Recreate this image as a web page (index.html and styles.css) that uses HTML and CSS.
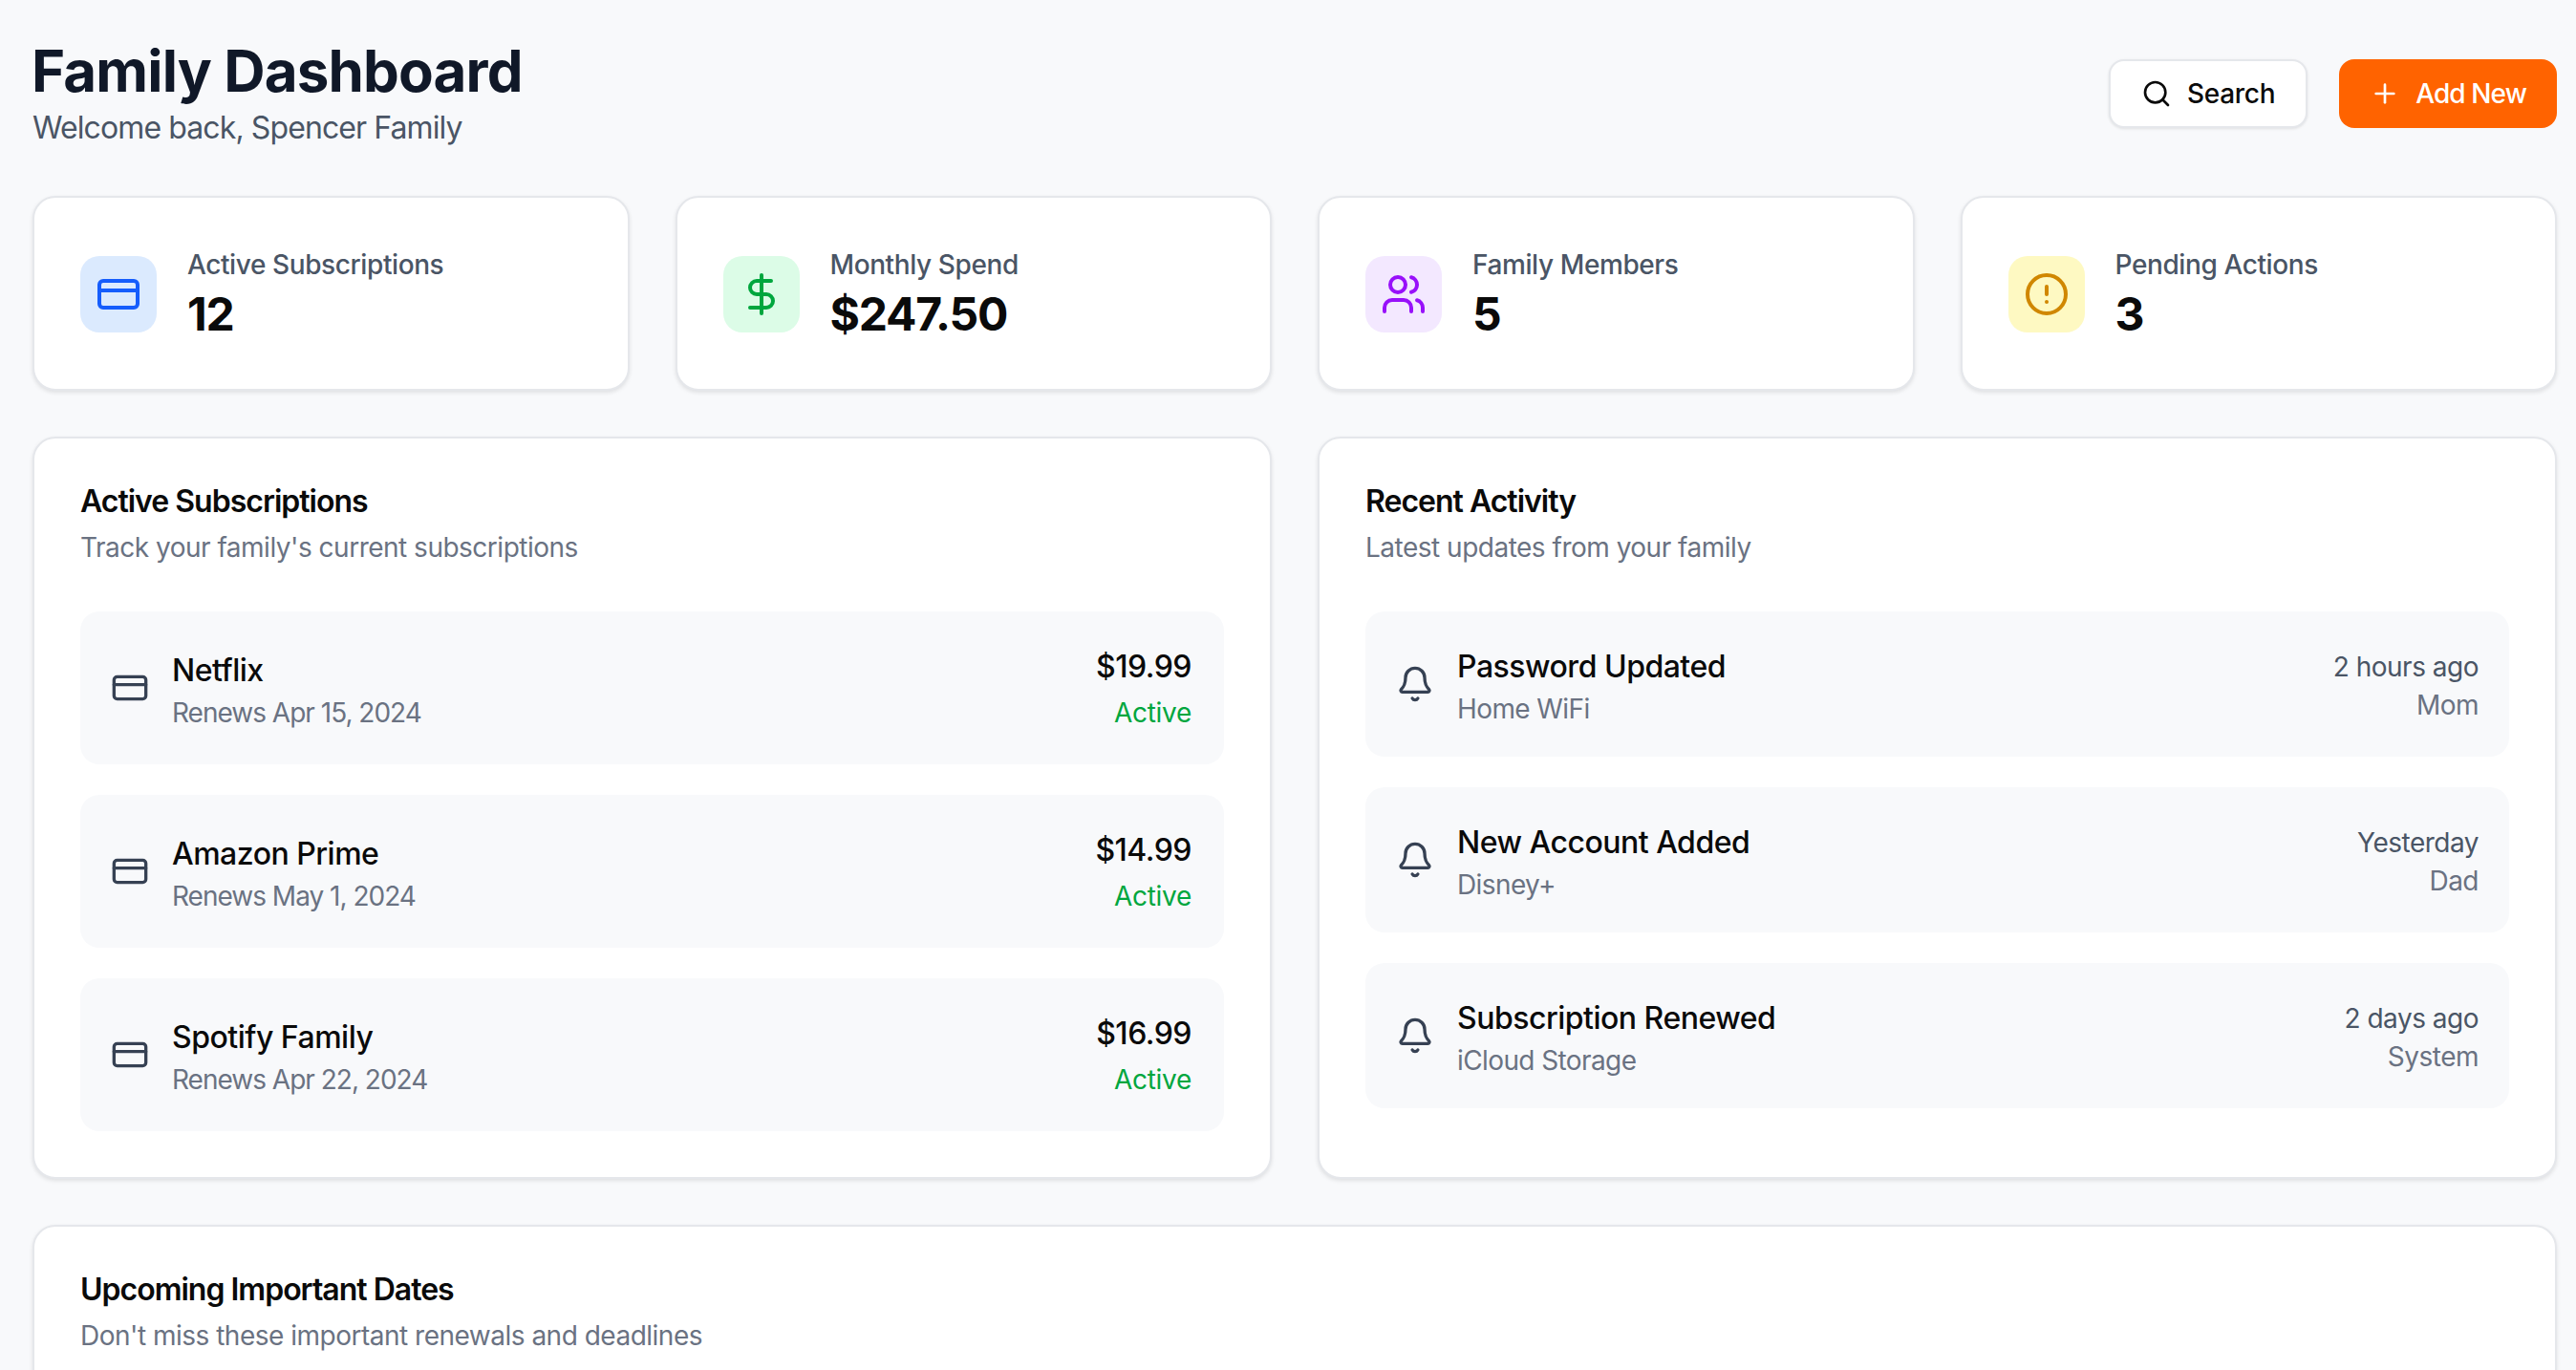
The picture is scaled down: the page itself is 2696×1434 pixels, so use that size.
FILE: index.html
```html
<!DOCTYPE html>
<html lang="en">
<head>
  <meta charset="UTF-8" />
  <meta name="viewport" content="width=device-width, initial-scale=1.0" />
  <title>Family Dashboard</title>
  <link rel="stylesheet" href="styles.css">
</head>
<body>
  <svg class="sprite" aria-hidden="true">
    <symbol id="i-card" viewBox="0 0 24 24"><rect x="2" y="5" width="20" height="14" rx="2"/><line x1="2" y1="10" x2="22" y2="10"/></symbol>
    <symbol id="i-bell" viewBox="0 0 24 24"><path d="M10.268 21a2 2 0 0 0 3.464 0"/><path d="M3.262 15.326A1 1 0 0 0 4 17h16a1 1 0 0 0 .74-1.673C19.41 13.956 18 12.499 18 8A6 6 0 0 0 6 8c0 4.499-1.411 5.956-2.738 7.326"/></symbol>
  </svg>

  <div class="page">
    <header class="top">
      <div>
        <h1>Family Dashboard</h1>
        <p class="welcome">Welcome back, Spencer Family</p>
      </div>
      <div class="actions">
        <button class="btn btn-light" type="button">
          <svg class="btn-icon" viewBox="0 0 24 24"><circle cx="11" cy="11" r="8"/><path d="m21 21-4.3-4.3"/></svg>
          Search
        </button>
        <button class="btn btn-orange" type="button">
          <svg class="btn-icon" viewBox="0 0 24 24"><path d="M5 12h14"/><path d="M12 5v14"/></svg>
          Add New
        </button>
      </div>
    </header>

    <section class="stats">
      <div class="card stat">
        <div class="stat-icon blue"><svg viewBox="0 0 24 24"><use href="#i-card"/></svg></div>
        <div class="stat-text">
          <div class="stat-label">Active Subscriptions</div>
          <div class="stat-value">12</div>
        </div>
      </div>
      <div class="card stat">
        <div class="stat-icon green">
          <svg viewBox="0 0 24 24"><line x1="12" y1="2" x2="12" y2="22"/><path d="M17 5H9.5a3.5 3.5 0 0 0 0 7h5a3.5 3.5 0 0 1 0 7H6"/></svg>
        </div>
        <div class="stat-text">
          <div class="stat-label">Monthly Spend</div>
          <div class="stat-value">$247.50</div>
        </div>
      </div>
      <div class="card stat">
        <div class="stat-icon purple">
          <svg viewBox="0 0 24 24"><path d="M16 21v-2a4 4 0 0 0-4-4H6a4 4 0 0 0-4 4v2"/><circle cx="9" cy="7" r="4"/><path d="M22 21v-2a4 4 0 0 0-3-3.87"/><path d="M16 3.13a4 4 0 0 1 0 7.75"/></svg>
        </div>
        <div class="stat-text">
          <div class="stat-label">Family Members</div>
          <div class="stat-value">5</div>
        </div>
      </div>
      <div class="card stat">
        <div class="stat-icon yellow">
          <svg viewBox="0 0 24 24"><circle cx="12" cy="12" r="10"/><line x1="12" y1="8" x2="12" y2="12"/><line x1="12" y1="16" x2="12.01" y2="16"/></svg>
        </div>
        <div class="stat-text">
          <div class="stat-label">Pending Actions</div>
          <div class="stat-value">3</div>
        </div>
      </div>
    </section>

    <section class="columns">
      <div class="card panel">
        <h2>Active Subscriptions</h2>
        <p class="panel-sub">Track your family's current subscriptions</p>
        <div class="list">
          <div class="row row-sub">
            <div class="row-main">
              <svg class="row-icon"><use href="#i-card"/></svg>
              <div class="row-text">
                <div class="row-title">Netflix</div>
                <div class="row-note">Renews Apr 15, 2024</div>
              </div>
            </div>
            <div class="row-side">
              <div class="price">$19.99</div>
              <div class="status">Active</div>
            </div>
          </div>
          <div class="row row-sub">
            <div class="row-main">
              <svg class="row-icon"><use href="#i-card"/></svg>
              <div class="row-text">
                <div class="row-title">Amazon Prime</div>
                <div class="row-note">Renews May 1, 2024</div>
              </div>
            </div>
            <div class="row-side">
              <div class="price">$14.99</div>
              <div class="status">Active</div>
            </div>
          </div>
          <div class="row row-sub">
            <div class="row-main">
              <svg class="row-icon"><use href="#i-card"/></svg>
              <div class="row-text">
                <div class="row-title">Spotify Family</div>
                <div class="row-note">Renews Apr 22, 2024</div>
              </div>
            </div>
            <div class="row-side">
              <div class="price">$16.99</div>
              <div class="status">Active</div>
            </div>
          </div>
        </div>
      </div>

      <div class="card panel">
        <h2>Recent Activity</h2>
        <p class="panel-sub">Latest updates from your family</p>
        <div class="list">
          <div class="row">
            <div class="row-main">
              <svg class="row-icon"><use href="#i-bell"/></svg>
              <div class="row-text">
                <div class="row-title">Password Updated</div>
                <div class="row-note">Home WiFi</div>
              </div>
            </div>
            <div class="row-side row-text">
              <div class="when">2 hours ago</div>
              <div class="who">Mom</div>
            </div>
          </div>
          <div class="row">
            <div class="row-main">
              <svg class="row-icon"><use href="#i-bell"/></svg>
              <div class="row-text">
                <div class="row-title">New Account Added</div>
                <div class="row-note">Disney+</div>
              </div>
            </div>
            <div class="row-side row-text">
              <div class="when">Yesterday</div>
              <div class="who">Dad</div>
            </div>
          </div>
          <div class="row">
            <div class="row-main">
              <svg class="row-icon"><use href="#i-bell"/></svg>
              <div class="row-text">
                <div class="row-title">Subscription Renewed</div>
                <div class="row-note">iCloud Storage</div>
              </div>
            </div>
            <div class="row-side row-text">
              <div class="when">2 days ago</div>
              <div class="who">System</div>
            </div>
          </div>
        </div>
      </div>
    </section>

    <section class="card panel">
      <h2>Upcoming Important Dates</h2>
      <p class="panel-sub">Don't miss these important renewals and deadlines</p>
    </section>
  </div>
</body>
</html>
```

FILE: styles.css
```css
* {
  box-sizing: border-box;
}
html, body {
  height: 100%;
  margin: 0;
  overflow: hidden;
}
body {
  font-family: Inter, "Liberation Sans", sans-serif;
  background-color: #f8f9fb;
  color: #0a0a0a;
}
.sprite {
  display: none;
}
svg {
  fill: none;
  stroke: currentColor;
  stroke-width: 2;
  stroke-linecap: round;
  stroke-linejoin: round;
}
.page {
  padding: 38px 20px 0 34px;
}

/* top bar */
.top {
  display: flex;
  justify-content: space-between;
  align-items: center;
  margin-bottom: 47px;
}
h1 {
  margin: 0 0 0 -1px;
  font-size: 60px;
  line-height: 72px;
  font-weight: 700;
  letter-spacing: -0.85px;
  color: #101828;
}
.welcome {
  margin: 0;
  font-size: 32px;
  line-height: 48px;
  letter-spacing: -0.9px;
  color: #4a5565;
}
.actions {
  display: flex;
  gap: 33px;
}
.btn {
  display: flex;
  align-items: center;
  gap: 16px;
  height: 72px;
  padding: 0 32px;
  border-radius: 16px;
  font-family: inherit;
  font-size: 28px;
  font-weight: 500;
  cursor: pointer;
}
.btn-icon {
  width: 32px;
  height: 32px;
}
.btn-light {
  background: #fff;
  color: #0a0a0a;
  border: 2px solid #e5e7eb;
  box-shadow: 0 1px 3px rgba(0, 0, 0, 0.1);
  letter-spacing: -0.3px;
}
.btn-orange {
  background: #ff6300;
  color: #fff;
  border: none;
  letter-spacing: -0.9px;
}

/* cards */
.card {
  background: #fff;
  border: 2px solid #e5e7eb;
  border-radius: 24px;
  box-shadow: 0 2px 4px rgba(0, 0, 0, 0.1);
}
.stats {
  display: grid;
  grid-template-columns: repeat(4, 1fr);
  gap: 48px;
  margin-bottom: 48px;
}
.stat {
  display: flex;
  align-items: center;
  gap: 32px;
  padding: 49px 48px 47px;
}
.stat-icon {
  display: flex;
  align-items: center;
  justify-content: center;
  width: 80px;
  height: 80px;
  border-radius: 20px;
}
.stat-icon svg {
  width: 48px;
  height: 48px;
}
.blue { background: #dbeafe; color: #155dfc; }
.green { background: #dcfce7; color: #00a63e; }
.purple { background: #f3e8ff; color: #9810fa; }
.yellow { background: #fef9c2; color: #d08700; }
.stat-text {
  padding-top: 1px;
  margin-bottom: -1px;
}
.stat-label {
  font-size: 28px;
  line-height: 40px;
  font-weight: 500;
  letter-spacing: -0.4px;
  color: #4a5565;
}
.stat-value {
  font-size: 48px;
  line-height: 64px;
  font-weight: 700;
  letter-spacing: -1.2px;
}

/* panels */
.columns {
  display: grid;
  grid-template-columns: 1fr 1fr;
  gap: 48px;
  margin-bottom: 48px;
}
.panel {
  padding: 48px;
}
h2 {
  margin: 0;
  font-size: 32px;
  line-height: 36px;
  font-weight: 600;
  letter-spacing: -1px;
}
.panel-sub {
  margin: 10px 0 0;
  font-size: 28px;
  line-height: 40px;
  letter-spacing: -0.5px;
  color: #6a7282;
}
.list {
  display: flex;
  flex-direction: column;
  gap: 32px;
  margin-top: 47px;
}
.row {
  display: flex;
  justify-content: space-between;
  align-items: center;
  padding: 32px;
  background: #f8f9fb;
  border-radius: 20px;
}
.row-main {
  display: flex;
  align-items: center;
  gap: 24px;
}
.row-icon {
  width: 40px;
  height: 40px;
  color: #364153;
}
.row-text {
  padding-top: 2px;
  margin-bottom: -2px;
}
.row-title {
  font-size: 32px;
  line-height: 48px;
  font-weight: 500;
  letter-spacing: -0.5px;
}
.row-note {
  font-size: 28px;
  line-height: 40px;
  letter-spacing: -0.6px;
  color: #6a7282;
}
.row-sub .row-note {
  letter-spacing: -1px;
}
.row-side {
  text-align: right;
}
.row-sub .row-side {
  margin-right: 2px;
}
.price {
  font-size: 32px;
  line-height: 52px;
  font-weight: 500;
  letter-spacing: -0.5px;
}
.status {
  margin: 2px 0;
  font-size: 28px;
  line-height: 40px;
  letter-spacing: -0.3px;
  color: #00a63e;
}
.when, .who {
  font-size: 28px;
  line-height: 40px;
  letter-spacing: -0.5px;
  color: #4a5565;
}
.who {
  color: #6a7282;
}
```
